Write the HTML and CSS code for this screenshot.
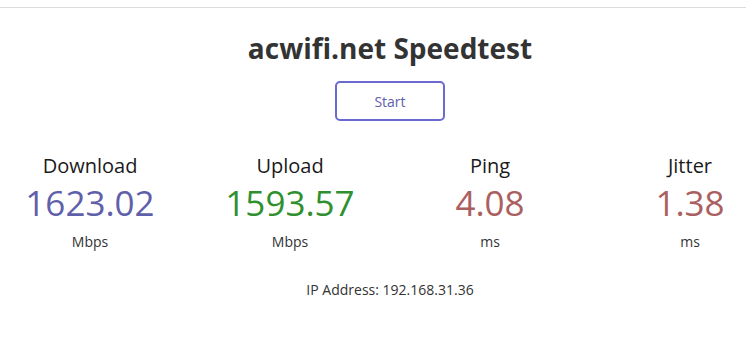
FILE: index.html
```html
<!DOCTYPE html>
<html>
<head>
<meta charset="utf-8">
<link rel="stylesheet" href="styles.css">
</head>
<body>
<div class="page">
  <h1 class="title">acwifi.net Speedtest</h1>
  <div class="btn-row"><button class="start">Start</button></div>
  <div class="stats">
    <div class="area">
      <div class="label">Download</div>
      <div class="value dl">1623.02</div>
      <div class="unit">Mbps</div>
    </div>
    <div class="area">
      <div class="label">Upload</div>
      <div class="value ul">1593.57</div>
      <div class="unit">Mbps</div>
    </div>
    <div class="area">
      <div class="label">Ping</div>
      <div class="value ms">4.08</div>
      <div class="unit">ms</div>
    </div>
    <div class="area">
      <div class="label">Jitter</div>
      <div class="value ms">1.38</div>
      <div class="unit">ms</div>
    </div>
  </div>
  <div class="ip">IP Address: 192.168.31.36</div>
</div>
</body>
</html>
```
FILE: styles.css
```css
html, body {
  margin: 0;
  padding: 0;
  background: #fff;
  overflow: hidden;
}
body {
  font-family: "Open Sans", "Noto Sans", sans-serif;
  color: #202020;
}
.page {
  margin-top: 7px;
  border-top: 1px solid #dcdcdc;
  width: 780px;
  text-align: center;
}
.title {
  margin: 21px 0 0;
  font-size: 28px;
  font-weight: 700;
  line-height: 38px;
  color: #333;
}
.btn-row {
  margin-top: 14px;
  display: flex;
  justify-content: center;
}
.start {
  width: 110px;
  height: 40px;
  border: 2px solid #6a6ad0;
  border-radius: 5px;
  background: #fff;
  color: #6060aa;
  font-family: inherit;
  font-size: 14px;
}
.stats {
  display: grid;
  grid-template-columns: repeat(4, 200px);
  justify-content: center;
  margin-top: 31px;
}
.area {
  display: flex;
  flex-direction: column;
  align-items: center;
}
.label {
  font-size: 20px;
  line-height: 28px;
  color: #1a1a1a;
}
.value {
  margin-top: 1px;
  font-size: 35px;
  line-height: 44px;
  font-weight: 400;
}
.dl { color: #6060aa; }
.ul { color: #309030; }
.ms { color: #aa6060; }
.unit {
  margin-top: 7px;
  font-size: 14px;
  line-height: 19px;
  color: #333;
}
.ip {
  margin-top: 29px;
  font-size: 14px;
  line-height: 19px;
  color: #333;
}
```
